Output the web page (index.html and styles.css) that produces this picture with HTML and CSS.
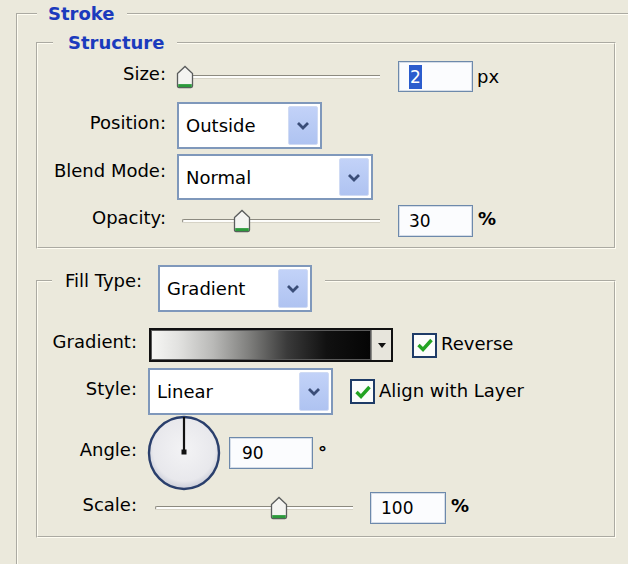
FILE: index.html
```html
<!DOCTYPE html>
<html>
<head>
<meta charset="utf-8">
<title>Stroke</title>
<link rel="stylesheet" href="styles.css">
</head>
<body>
<fieldset class="group outer">
  <legend class="title outer-title">Stroke</legend>

  <fieldset class="group structure">
    <legend class="title sub-title">Structure</legend>

    <div class="row row-size">
      <span class="lbl">Size:</span>
      <div class="slider">
        <div class="track"></div>
        <span class="thumb" style="left:-1px">
          <svg width="18" height="24" viewBox="0 0 18 24"><path d="M1.5 8.5 L9 1.5 L16.5 8.5 V21 Q16.5 22.5 15 22.5 H3 Q1.5 22.5 1.5 21 Z" fill="#f4f4f1" stroke="#5a5c5c" stroke-width="1.3"/><path d="M2.2 20.6 H15.8" stroke="#2c9a3c" stroke-width="3"/></svg>
        </span>
      </div>
      <div class="field f-num"><span class="selected">2</span></div>
      <span class="unit">px</span>
    </div>

    <div class="row row-pos">
      <span class="lbl">Position:</span>
      <div class="select s-pos">
        <span class="val">Outside</span>
        <span class="btn"><svg width="14" height="9" viewBox="0 0 14 9"><path d="M2 2 L7 7 L12 2" fill="none" stroke="#3a4d78" stroke-width="2.8"/></svg></span>
      </div>
    </div>

    <div class="row row-blend">
      <span class="lbl lbl-high">Blend Mode:</span>
      <div class="select s-blend">
        <span class="val">Normal</span>
        <span class="btn"><svg width="14" height="9" viewBox="0 0 14 9"><path d="M2 2 L7 7 L12 2" fill="none" stroke="#3a4d78" stroke-width="2.8"/></svg></span>
      </div>
    </div>

    <div class="row row-opacity">
      <span class="lbl">Opacity:</span>
      <div class="slider">
        <div class="track"></div>
        <span class="thumb" style="left:56px">
          <svg width="18" height="24" viewBox="0 0 18 24"><path d="M1.5 8.5 L9 1.5 L16.5 8.5 V21 Q16.5 22.5 15 22.5 H3 Q1.5 22.5 1.5 21 Z" fill="#f4f4f1" stroke="#5a5c5c" stroke-width="1.3"/><path d="M2.2 20.6 H15.8" stroke="#2c9a3c" stroke-width="3"/></svg>
        </span>
      </div>
      <div class="field f-num">30</div>
      <span class="unit pct">%</span>
    </div>
  </fieldset>

  <fieldset class="group fill">
    <legend class="fill-legend">
      <span class="fill-lbl">Fill Type:</span>
      <span class="select s-fill">
        <span class="val">Gradient</span>
        <span class="btn"><svg width="14" height="9" viewBox="0 0 14 9"><path d="M2 2 L7 7 L12 2" fill="none" stroke="#3a4d78" stroke-width="2.8"/></svg></span>
      </span>
    </legend>

    <div class="row row-grad">
      <span class="lbl lbl-f">Gradient:</span>
      <div class="gradient">
        <div class="grad-fill"></div>
        <div class="grad-btn"><svg width="8" height="5" viewBox="0 0 8 5"><path d="M0 0 H8 L4 5 Z" fill="#111"/></svg></div>
      </div>
      <span class="check c-rev"><svg width="18" height="16" viewBox="0 0 18 16"><path d="M2.5 8 L7 12.5 L15.5 3" fill="none" stroke="#22a322" stroke-width="3.4"/></svg></span>
      <span class="check-lbl">Reverse</span>
    </div>

    <div class="row row-style">
      <span class="lbl lbl-f">Style:</span>
      <div class="select s-style">
        <span class="val">Linear</span>
        <span class="btn"><svg width="14" height="9" viewBox="0 0 14 9"><path d="M2 2 L7 7 L12 2" fill="none" stroke="#3a4d78" stroke-width="2.8"/></svg></span>
      </div>
      <span class="check c-align"><svg width="18" height="16" viewBox="0 0 18 16"><path d="M2.5 8 L7 12.5 L15.5 3" fill="none" stroke="#22a322" stroke-width="3.4"/></svg></span>
      <span class="check-lbl">Align with Layer</span>
    </div>

    <div class="row row-angle">
      <span class="lbl lbl-f">Angle:</span>
      <svg class="dial" width="74" height="76" viewBox="0 0 74 76">
        <defs>
          <radialGradient id="dialbg" cx="50%" cy="45%" r="55%">
            <stop offset="0" stop-color="#f3f3f5"/>
            <stop offset="0.8" stop-color="#e8e8ec"/>
            <stop offset="1" stop-color="#c9ccd8"/>
          </radialGradient>
        </defs>
        <ellipse cx="37" cy="38" rx="35" ry="36" fill="url(#dialbg)" stroke="#2a3f6c" stroke-width="2.4"/>
        <line x1="37" y1="2" x2="37" y2="37" stroke="#111" stroke-width="2.2"/>
        <rect x="34.5" y="34.5" width="5" height="5" fill="#111"/>
      </svg>
      <div class="field f-angle">90</div>
      <span class="unit deg">°</span>
    </div>

    <div class="row row-scale">
      <span class="lbl lbl-f">Scale:</span>
      <div class="slider s-scale">
        <div class="track"></div>
        <span class="thumb" style="left:121px">
          <svg width="18" height="24" viewBox="0 0 18 24"><path d="M1.5 8.5 L9 1.5 L16.5 8.5 V21 Q16.5 22.5 15 22.5 H3 Q1.5 22.5 1.5 21 Z" fill="#f4f4f1" stroke="#5a5c5c" stroke-width="1.3"/><path d="M2.2 20.6 H15.8" stroke="#2c9a3c" stroke-width="3"/></svg>
        </span>
      </div>
      <div class="field f-scale">100</div>
      <span class="unit pct">%</span>
    </div>
  </fieldset>
</fieldset>
</body>
</html>
```

FILE: styles.css
```css
* { box-sizing: border-box; }

html, body {
  margin: 0;
  height: 100%;
}

body {
  background: #ebe9dc;
  overflow: hidden;
  font-family: "DejaVu Sans", "Noto Sans", sans-serif;
  font-size: 18px;
  color: #000;
}

.group {
  border: 2px groove #fffdf2;
  margin: 0;
  padding: 0;
  min-width: 0;
}

.outer {
  margin: 3px 0 0 16px;
  width: 640px;
  height: 700px;
}

.title {
  font-weight: bold;
  color: #1b3bbd;
  font-size: 18px;
  line-height: 21px;
}

.outer-title {
  margin-left: 19px;
  padding: 0 12px 0 11px;
}

.structure {
  margin: 8px 0 0 18px;
  width: 580px;
  padding: 8px 0 10px 0;
}

.sub-title {
  margin-left: 15px;
  padding: 0 13px 0 15px;
}

.row {
  display: flex;
  align-items: center;
}

.lbl {
  width: 128px;
  margin-right: 11px;
  text-align: right;
  padding-bottom: 7px;
  white-space: nowrap;
}

.lbl-high { padding-bottom: 13px; }

.lbl-f { width: 99px; }

.row-size { height: 31px; }
.row-pos { height: 47px; margin-top: 10px; }
.row-blend { height: 46px; margin-top: 5px; }
.row-opacity { height: 32px; margin-top: 5px; }

/* slider */
.slider {
  position: relative;
  width: 203px;
  height: 24px;
  display: flex;
  align-items: center;
}

.track {
  flex: 1;
  margin-left: 5px;
  height: 4px;
  border-top: 1px solid #8c8a80;
  border-left: 1px solid #8c8a80;
  border-bottom: 1px solid #d6d3c6;
  background: #fdfdfb;
  border-radius: 2px 0 0 2px;
}

.thumb {
  position: absolute;
  top: 0;
  width: 18px;
  height: 24px;
}

.thumb svg { display: block; }

/* fields */
.field {
  display: flex;
  align-items: center;
  background: #fbfcfe;
  border: 1px solid #6d89ab;
  box-shadow: inset 0 0 0 1px #d5dde8;
  padding-left: 10px;
  font-size: 17px;
}

.f-num {
  width: 75px;
  height: 31px;
  margin-left: 18px;
}

.row-opacity .f-num { height: 32px; }

.selected {
  background: #2b5ccd;
  color: #fff;
  line-height: 24px;
  padding: 0 1px;
}

.unit { margin-left: 4px; }

.pct {
  font-weight: bold;
  margin-left: 5px;
  padding-bottom: 6px;
}

/* select */
.select {
  display: flex;
  align-items: stretch;
  background: #fff;
  border: 2px solid #7f98bb;
  padding: 2px;
}

.select .val {
  flex: 1;
  display: flex;
  align-items: center;
  padding-left: 5px;
  white-space: nowrap;
}

.select .btn {
  width: 30px;
  display: flex;
  align-items: center;
  justify-content: center;
  background: linear-gradient(#c2d2f8, #afc3f1);
  border: 1px solid #d0dbf4;
  border-radius: 2px;
}

.select .btn svg { display: block; }

.s-pos { width: 145px; height: 47px; }
.s-blend { width: 196px; height: 46px; }
.s-fill { width: 154px; height: 47px; flex: none; }
.s-style { width: 185px; height: 47px; }

/* fill group */
.fill {
  margin: 16px 0 0 18px;
  width: 580px;
  height: 273px;
  padding: 31px 0 9px 0;
}

.fill-legend {
  display: flex;
  align-items: flex-start;
  height: 32px;
  margin-left: 14px;
  padding: 0 13px 0 13px;
}

.fill-lbl {
  width: 93px;
  align-self: center;
  padding-bottom: 2px;
  white-space: nowrap;
}

.row-grad { height: 34px; }
.row-style { height: 47px; margin-top: 6px; }
.row-angle { height: 76px; margin-top: 0; }
.row-scale { height: 32px; margin-top: 1px; }

.gradient {
  display: flex;
  width: 244px;
  height: 34px;
  margin-left: 1px;
  border: 2px solid #111;
  background: #111;
}

.grad-fill {
  flex: 1;
  border: 1px solid #5a5a5a;
  background: linear-gradient(90deg, #f6f6f4 0%, #e2e2e0 12%, #b9b9b7 28%, #7d7d7b 45%, #3a3a3a 62%, #111 80%, #050505 100%);
}

.grad-btn {
  width: 20px;
  display: flex;
  align-items: center;
  justify-content: center;
  background: #e7e5dc;
  border-left: 1px solid #8a8a86;
}

.grad-btn svg { display: block; }

.check {
  width: 25px;
  height: 25px;
  display: flex;
  align-items: center;
  justify-content: center;
  background: #fbfcfb;
  border: 2px solid #1e3b67;
}

.check svg { display: block; }

.c-rev { margin-left: 19px; }
.c-align { margin-left: 17px; }

.check-lbl {
  margin-left: 4px;
  padding-bottom: 3px;
  white-space: nowrap;
}

.dial { display: block; margin-left: -1px; }

.f-angle {
  width: 84px;
  height: 32px;
  margin-left: 8px;
  padding-left: 12px;
}

.deg {
  font-weight: bold;
  margin-left: 5px;
  padding-bottom: 2px;
}

.s-scale { width: 204px; margin-left: 1px; }
.s-scale .track { margin-left: 6px; }

.f-scale {
  width: 76px;
  height: 32px;
  margin-left: 17px;
}
```
